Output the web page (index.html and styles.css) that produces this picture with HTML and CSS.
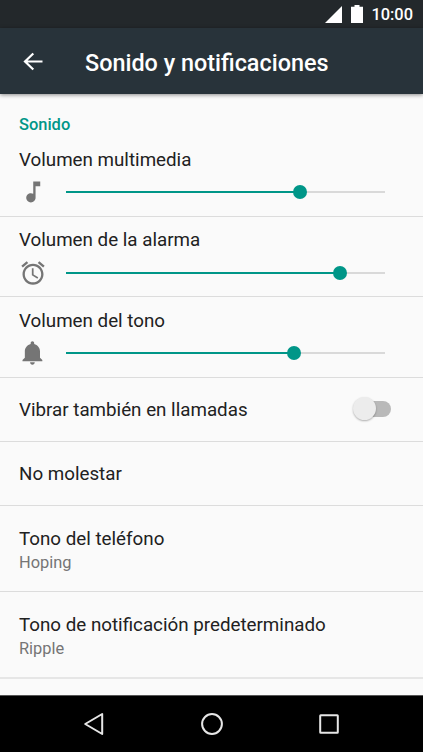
FILE: index.html
```
<!DOCTYPE html>
<html lang="es">
<head>
    <meta charset="UTF-8">
    <meta name="viewport" content="width=device-width, initial-scale=1.0">
    <title>Sonido y notificaciones</title>
    <link rel="stylesheet" href="styles.css">
</head>
<body>
    <div class="status-bar">
        <svg class="signal" width="17" height="17" viewBox="0 0 17 17"><path d="M17 0v17H0z"/></svg>
        <svg class="battery" width="12" height="18" viewBox="0 0 12 18"><path d="M3.5 0h5v1.7H12V18H0V1.7h3.5z"/></svg>
        <span class="clock">10:00</span>
    </div>

    <header class="app-bar">
        <svg class="back" width="28" height="28" viewBox="0 0 28 28"><path d="M14.3 5.5L6 13.5l8.300 8M6.500 13.500h17"/></svg>
        <h1>Sonido y notificaciones</h1>
    </header>

    <main class="settings">
        <h2 class="section-title">Sonido</h2>

        <section class="row volume">
            <p class="title">Volumen multimedia</p>
            <div class="control">
                <svg class="icon" width="28" height="28" viewBox="0 0 24 24"><path d="M12 3v10.550c-.59-.34-1.270-.55-2-.55-2.210 0-4 1.790-4 4s1.790 4 4 4 4-1.790 4-4V7h4V3h-6z" transform="translate(.2 0)"/></svg>
                <div class="slider">
                    <div class="fill" style="width: 73.4%"><span class="thumb"></span></div>
                </div>
            </div>
        </section>

        <section class="row volume">
            <p class="title">Volumen de la alarma</p>
            <div class="control">
                <svg class="icon" width="28" height="28" viewBox="0 0 24 24"><path d="M22 5.720l-4.600-3.860-1.290 1.530 4.600 3.860L22 5.720zM7.880 3.390L6.600 1.860 2 5.710l1.290 1.530 4.590-3.850zM12.500 8H11v6l4.750 2.850.75-1.230-4-2.370V8zM12 4c-4.970 0-9 4.030-9 9s4.020 9 9 9c4.970 0 9-4.030 9-9s-4.030-9-9-9zm0 16c-3.870 0-7-3.130-7-7s3.130-7 7-7 7 3.130 7 7-3.130 7-7 7z"/></svg>
                <div class="slider">
                    <div class="fill" style="width: 85.8%"><span class="thumb"></span></div>
                </div>
            </div>
        </section>

        <section class="row volume">
            <p class="title">Volumen del tono</p>
            <div class="control">
                <svg class="icon" width="28" height="28" viewBox="0 0 24 24"><path d="M11.500 22c1.100 0 2-.9 2-2h-4c0 1.100.9 2 2 2zm6.500-6v-5.500c0-3.070-2.130-5.640-5-6.320V3.500c0-.83-.67-1.500-1.500-1.500S10 2.670 10 3.500v.68c-2.870.68-5 3.250-5 6.320V16l-2 2v1h17v-1l-2-2z"/></svg>
                <div class="slider">
                    <div class="fill" style="width: 71.6%"><span class="thumb"></span></div>
                </div>
            </div>
        </section>

        <section class="row single">
            <p class="title">Vibrar también en llamadas</p>
            <div class="switch"><span class="knob"></span></div>
        </section>

        <section class="row single">
            <p class="title">No molestar</p>
        </section>

        <section class="row double">
            <p class="title">Tono del teléfono</p>
            <p class="summary">Hoping</p>
        </section>

        <section class="row double last">
            <p class="title">Tono de notificación predeterminado</p>
            <p class="summary">Ripple</p>
        </section>
    </main>

    <nav class="nav-bar">
        <svg width="24" height="24" viewBox="0 0 24 24"><path d="M20.200 2v20L3.200 12z"/></svg>
        <svg width="24" height="24" viewBox="0 0 24 24"><circle cx="12" cy="12" r="9.900"/></svg>
        <svg width="24" height="24" viewBox="0 0 24 24"><rect x="3.200" y="3.200" width="17.600" height="17.600" rx=".5"/></svg>
    </nav>
</body>
</html>
```
FILE: styles.css
```
* {
    box-sizing: border-box;
}

body {
    margin: 0;
    height: 752px;
    display: flex;
    flex-direction: column;
    overflow: hidden;
    background-color: #fafafa;
    color: #212121;
    font-family: Roboto, sans-serif;
}

h1, h2, p {
    margin: 0;
}

.status-bar {
    height: 28px;
    padding-right: 10px;
    display: flex;
    align-items: center;
    justify-content: flex-end;
    background-color: #23282b;
    color: white;
    fill: white;
}

.battery {
    margin: 0 8px 0 9px;
}

.clock {
    font-size: 16.4px;
    font-weight: 500;
    line-height: 20px;
    padding-top: 2px;
}

.app-bar {
    height: 66px;
    padding: 2px 0 0 19px;
    display: flex;
    align-items: center;
    background-color: #28333a;
    color: white;
    box-shadow: 0 1px 4px rgba(0, 0, 0, 0.45);
}

.back {
    fill: none;
    stroke: white;
    stroke-width: 2.2;
}

.app-bar h1 {
    margin: 1px 0 0 38px;
    font-size: 23.4px;
    font-weight: 500;
    line-height: 28px;
}

.settings {
    flex: 1;
}

.section-title {
    padding: 21px 19px 2px;
    color: #009688;
    font-size: 16.45px;
    font-weight: 500;
    line-height: 19px;
}

.row {
    padding: 0 19px;
    border-bottom: 1px solid #dcdcdc;
}

.title {
    font-size: 18.78px;
    line-height: 22px;
}

.summary {
    margin-top: 3px;
    color: #757575;
    font-size: 16.4px;
    line-height: 19px;
}

.volume {
    height: 81px;
    padding-top: 13px;
}

.volume:nth-of-type(2) {
    height: 80px;
    padding-top: 12px;
}

.control {
    display: flex;
    align-items: center;
    height: 28px;
    margin-top: 7px;
}

.volume:nth-of-type(2) .control {
    margin-top: 8px;
}

.icon {
    fill: #757575;
}

.slider {
    width: 319px;
    height: 2px;
    margin-left: 19px;
    background-color: #d9d9d9;
}

.fill {
    height: 2px;
    display: flex;
    align-items: center;
    justify-content: flex-end;
    background-color: #009688;
}

.thumb {
    flex: none;
    width: 14px;
    height: 14px;
    margin-right: -7px;
    border-radius: 50%;
    background-color: #009688;
}

.single {
    height: 64px;
    display: flex;
    align-items: center;
    justify-content: space-between;
}

.switch {
    width: 34px;
    height: 16px;
    margin: 0 13px 2px 0;
    display: flex;
    align-items: center;
    border-radius: 8px;
    background-color: #b9b9b9;
}

.knob {
    flex: none;
    width: 23px;
    height: 23px;
    margin-left: -4px;
    border-radius: 50%;
    background-color: #ececec;
    box-shadow: 0 1px 2px rgba(0, 0, 0, 0.3);
}

.double {
    height: 86px;
    padding-top: 22px;
}

.last {
    height: 87px;
    border-bottom: 2px solid #e6e6e6;
}

.nav-bar {
    height: 57px;
    display: flex;
    align-items: center;
    justify-content: center;
    gap: 93.5px;
    border-top: 1px solid #555;
    background-color: black;
}

.nav-bar svg {
    fill: none;
    stroke: #e6e6e6;
    stroke-width: 2;
    stroke-linejoin: round;
}
```
